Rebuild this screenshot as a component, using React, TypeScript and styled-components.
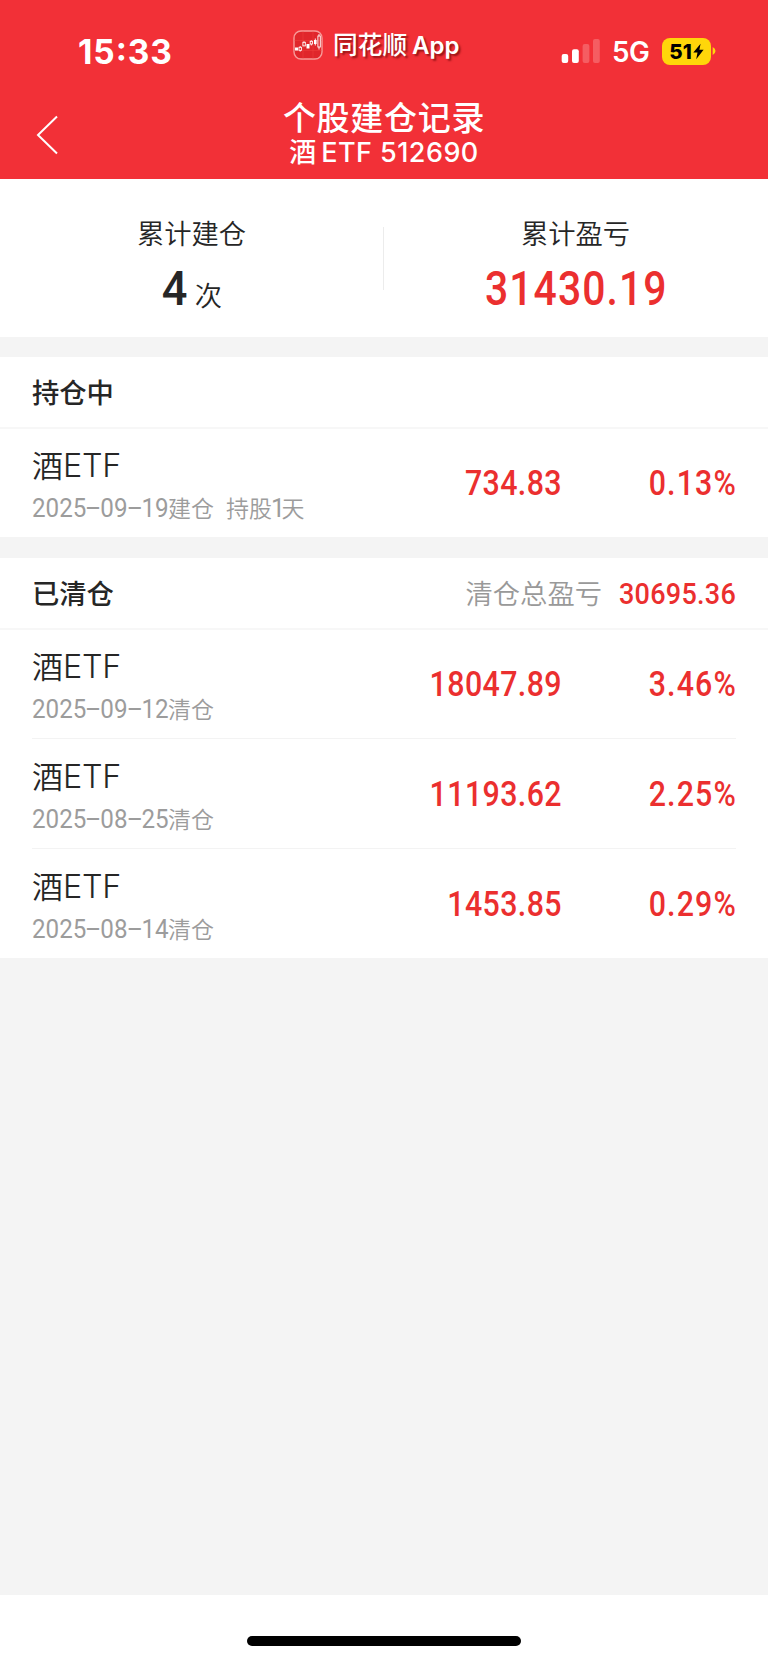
import React from "react";
import styled, { createGlobalStyle } from "styled-components";

const latin = `Inter, "Noto Sans CJK SC", sans-serif`;
const digits = `Roboto, "Noto Sans CJK SC", sans-serif`;
const RED = "#eb2f2f";

const GlobalStyle = createGlobalStyle`
  body { margin: 0; background: #f4f4f4; }
  * { box-sizing: border-box; }
`;

const Screen = styled.div`
  width: 768px;
  height: 1663px;
  display: flex;
  flex-direction: column;
  background: #f4f4f4;
  color: #262626;
  font-family: ${latin};
  overflow: hidden;
`;

const Header = styled.header`
  height: 179px;
  flex: none;
  background: #f23037;
  color: #fff;
`;

const StatusBar = styled.div`
  height: 90px;
  display: grid;
  grid-template-columns: 293px 1fr 207px;
`;

const Clock = styled.div`
  padding: 32px 0 0 78px;
  font-size: 33.5px;
  line-height: 40px;
  font-weight: 750;
  letter-spacing: 0.9px;
  font-feature-settings: "case";
`;

const Brand = styled.div`
  display: flex;
  align-items: center;
  height: 30px;
  margin-top: 30px;
  text-shadow: 2px 2px 2px rgba(90, 0, 0, 0.6);
`;

const BrandName = styled.span`
  margin-left: 10px;
  font-size: 24.7px;
  line-height: 30px;
  font-weight: 500;
`;

const BrandLatin = styled.span`
  margin-left: 5px;
  padding-top: 1px;
  font-size: 24px;
  line-height: 30px;
  font-weight: 600;
`;

const StatusRight = styled.div`
  display: flex;
  align-items: center;
  height: 40px;
  margin-top: 31px;
`;

const Network = styled.span`
  width: 50px;
  margin-left: 11px;
  padding-top: 2px;
  font-size: 27.8px;
  font-weight: 600;
  letter-spacing: -0.5px;
`;

const Battery = styled.div`
  display: flex;
  align-items: center;
  justify-content: center;
  gap: 1px;
  width: 49px;
  height: 27px;
  border-radius: 8px;
  background: #ffd60a;
  color: #000;
  font-size: 20.5px;
  font-weight: 800;
`;

const NavBar = styled.div`
  display: grid;
  grid-template-columns: 100px 1fr 100px;
  height: 89px;
`;

const BackButton = styled.button`
  display: flex;
  align-items: center;
  height: 89px;
  padding: 1px 0 0 36px;
  border: 0;
  background: none;
`;

const Titles = styled.div`
  text-align: center;
  padding-top: 8px;
`;

const Title = styled.h1`
  margin: 0;
  font-size: 33px;
  line-height: 40px;
  font-weight: 500;
  letter-spacing: 0.7px;
`;

const Subtitle = styled.div`
  display: flex;
  justify-content: center;
  align-items: center;
  gap: 5px;
  font-size: 27px;
  line-height: 30px;
  font-weight: 500;
`;

const Code = styled.span`
  font-weight: 550;
  letter-spacing: 0.45px;
`;

const Summary = styled.section`
  display: grid;
  grid-template-columns: 383px 1px 383px;
  align-items: center;
  height: 158px;
  flex: none;
  background: #fff;
`;

const Metric = styled.div`
  height: 158px;
  padding-top: 36px;
  text-align: center;
`;

const MetricLabel = styled.div`
  font-size: 27.3px;
  line-height: 40px;
  font-weight: 350;
`;

const MetricValue = styled.div<{ $tone?: string }>`
  display: flex;
  justify-content: center;
  align-items: baseline;
  margin-top: 6px;
  font-family: ${digits};
  font-size: 47.5px;
  line-height: 56px;
  font-weight: 500;
  color: ${(p) => p.$tone ?? "inherit"};
`;

const Figures = styled.span<{ $scale?: number }>`
  display: inline-block;
  letter-spacing: 1.3px;
  margin-right: -1.3px;
  transform: scaleX(${(p) => p.$scale ?? 0.86});
`;

const Unit = styled.span`
  margin-left: 7px;
  font-size: 27.3px;
  font-weight: 350;
  line-height: 40px;
  transform: translateY(1px);
`;

const MetricRule = styled.div`
  width: 1px;
  height: 63px;
  background: #ececec;
`;

const Panel = styled.section`
  flex: none;
  margin-top: 20px;
  background: #fff;
  & + & { margin-top: 21px; }
`;

const PanelHead = styled.div`
  display: flex;
  align-items: center;
  justify-content: space-between;
  height: 72px;
  padding: 4px 32px 0;
  border-bottom: 2px solid #f7f7f7;
`;

const PanelTitle = styled.h2`
  margin: 0;
  font-size: 27.3px;
  line-height: 40px;
  font-weight: 500;
`;

const Total = styled.div`
  display: flex;
  align-items: center;
  gap: 17px;
  font-size: 27.3px;
  line-height: 40px;
  font-weight: 350;
  color: #999;
`;

const TotalValue = styled.span`
  width: 117px;
  display: flex;
  justify-content: flex-end;
  font-family: ${digits};
  font-size: 30px;
  line-height: 40px;
  font-weight: 500;
  letter-spacing: 0.3px;
  color: ${RED};
  transform: translateY(-1px) scaleX(0.9);
  transform-origin: right center;
`;

const Row = styled.div<{ $height: number; $last?: boolean }>`
  display: grid;
  grid-template-columns: 300px 229px 1fr;
  align-items: center;
  height: ${(p) => p.$height}px;
  margin: 0 32px;
  border-bottom: ${(p) => (p.$last ? "0" : "1px solid #f3f3f3")};
`;

const Info = styled.div`
  padding-top: 8px;
`;

const Name = styled.div`
  font-size: 31px;
  line-height: 40px;
  font-weight: 350;
`;

const NameLatin = styled.span`
  font-size: 32.3px;
  font-weight: 350;
  letter-spacing: -0.2px;
`;

const Meta = styled.div`
  margin-top: 4px;
  display: flex;
  align-items: baseline;
  font-family: ${digits};
  font-size: 23px;
  line-height: 36px;
  font-weight: 350;
  color: #9c9c9c;
`;

const DateText = styled.span`
  display: inline-block;
  width: 136px;
  font-size: 26px;
  white-space: nowrap;
  font-weight: 400;
  transform: scaleX(0.93);
  transform-origin: left center;
`;

const Dash = styled.span`
  display: inline-block;
  width: 15px;
  text-align: center;
  transform: translateY(-1px) scaleX(2.1);
`;

const Held = styled.span`
  margin-left: 12px;
`;

const Days = styled.span`
  font-size: 25px;
  font-weight: 400;
  margin: 0 -1.5px 0 -1px;
  letter-spacing: -2px;
`;

const Amount = styled.div<{ $tracking: number }>`
  text-align: right;
  font-family: ${digits};
  font-size: 34.5px;
  line-height: 40px;
  font-weight: 500;
  letter-spacing: ${(p) => p.$tracking}px;
  color: ${RED};
  transform: translateX(1px) scaleX(0.88);
  transform-origin: right center;
`;

const HomeArea = styled.footer`
  display: flex;
  justify-content: center;
  height: 68px;
  flex: none;
  margin-top: auto;
  padding-top: 41px;
  background: #fff;
`;

const HomeBar = styled.div`
  width: 274px;
  height: 10px;
  border-radius: 5px;
  background: #000;
`;

interface Trade {
  date: string;
  note: string;
  days?: number;
  amount: string;
  rate: string;
}

const holding: Trade = { date: "2025-09-19", note: "建仓", days: 1, amount: "734.83", rate: "0.13%" };

const closed: Trade[] = [
  { date: "2025-09-12", note: "清仓", amount: "18047.89", rate: "3.46%" },
  { date: "2025-08-25", note: "清仓", amount: "11193.62", rate: "2.25%" },
  { date: "2025-08-14", note: "清仓", amount: "1453.85", rate: "0.29%" },
];

const TradeRow = ({ trade, height, last }: { trade: Trade; height: number; last?: boolean }) => (
  <Row $height={height} $last={last}>
    <Info>
      <Name>酒<NameLatin>ETF</NameLatin></Name>
      <Meta>
        <DateText>
          {trade.date.split("-").map((part, i) => (
            <React.Fragment key={i}>
              {i > 0 && <Dash>-</Dash>}
              {part}
            </React.Fragment>
          ))}
        </DateText>
        <span>{trade.note}</span>
        {trade.days !== undefined && (
          <Held>持股<Days>{trade.days}</Days>天</Held>
        )}
      </Meta>
    </Info>
    <Amount $tracking={0.45}>{trade.amount}</Amount>
    <Amount $tracking={1.3}>{trade.rate}</Amount>
  </Row>
);

const AppIcon = () => (
  <svg width="30" height="30" viewBox="0 0 30 30">
    <rect x="1" y="1" width="28" height="28" rx="7" fill="#e0262b" stroke="#f79a98" strokeWidth="1.4" />
    <path d="M1.5 10.5h27M1.5 20.5h27M10 1.5v27M20 1.5v27" stroke="#f0403f" strokeWidth=".5" />
    <g fill="#fff">
      <rect x="2" y="17.5" width="3" height="3" />
      <rect x="13.5" y="14" width="3" height="4.5" />
      <rect x="21" y="10" width="2.6" height="4" />
    </g>
    <g fill="none" stroke="#fff" strokeWidth=".9">
      <path d="M7.2 16v1.3M7.2 20.3v1.3M11 11.3v1M18.3 10.3v1M18.3 14v1.5M22.3 8.5v7M26 4v2M26 17v2.5" />
      <rect x="6" y="17.3" width="2.4" height="3" />
      <rect x="9.9" y="12.3" width="2.4" height="3.6" />
      <rect x="17.2" y="11.3" width="2.2" height="2.7" />
      <rect x="24.9" y="6" width="2.4" height="11" />
    </g>
  </svg>
);

const Signal = () => (
  <svg width="40" height="26" viewBox="0 0 40 26" fill="#fff">
    <rect x="0.7" y="16" width="6.5" height="9" rx="2" />
    <rect x="11" y="11.3" width="6.8" height="13.7" rx="2" />
    <rect x="21.6" y="6" width="6.8" height="19" rx="2" opacity=".22" />
    <rect x="32" y="1" width="6.8" height="24" rx="2" opacity=".22" />
  </svg>
);

const App = () => (
  <Screen>
    <GlobalStyle />
    <Header>
      <StatusBar>
        <Clock>15:33</Clock>
        <Brand>
          <AppIcon />
          <BrandName>同花顺</BrandName>
          <BrandLatin>App</BrandLatin>
        </Brand>
        <StatusRight>
          <Signal />
          <Network>5G</Network>
          <Battery>
            51
            <svg width="11" height="17" viewBox="0 0 11 17">
              <path d="M7.6.8.3 9.6h4.2L3.2 16.2l7.4-9.4H6.4z" />
            </svg>
          </Battery>
          <svg width="6" height="10" viewBox="0 0 6 10">
            <path d="M1.7 1Q4.5 2.3 4.5 5T1.7 9z" fill="#ffd60a" />
          </svg>
        </StatusRight>
      </StatusBar>
      <NavBar>
        <BackButton aria-label="返回">
          <svg width="24" height="40" viewBox="0 0 24 40" fill="none" stroke="#fff" strokeWidth="2">
            <path d="M21 1.5 2 20l19 18.5" />
          </svg>
        </BackButton>
        <Titles>
          <Title>个股建仓记录</Title>
          <Subtitle>
            <span>酒</span>
            <Code>ETF 512690</Code>
          </Subtitle>
        </Titles>
      </NavBar>
    </Header>

    <Summary>
      <Metric>
        <MetricLabel>累计建仓</MetricLabel>
        <MetricValue><Figures $scale={0.95}>4</Figures><Unit>次</Unit></MetricValue>
      </Metric>
      <MetricRule />
      <Metric>
        <MetricLabel>累计盈亏</MetricLabel>
        <MetricValue $tone={RED}><Figures>31430.19</Figures></MetricValue>
      </Metric>
    </Summary>

    <Panel>
      <PanelHead>
        <PanelTitle>持仓中</PanelTitle>
      </PanelHead>
      <TradeRow trade={holding} height={108} last />
    </Panel>

    <Panel>
      <PanelHead>
        <PanelTitle>已清仓</PanelTitle>
        <Total>
          清仓总盈亏
          <TotalValue>30695.36</TotalValue>
        </Total>
      </PanelHead>
      <TradeRow trade={closed[0]} height={109} />
      <TradeRow trade={closed[1]} height={110} />
      <TradeRow trade={closed[2]} height={109} last />
    </Panel>

    <HomeArea>
      <HomeBar />
    </HomeArea>
  </Screen>
);

export default App;
